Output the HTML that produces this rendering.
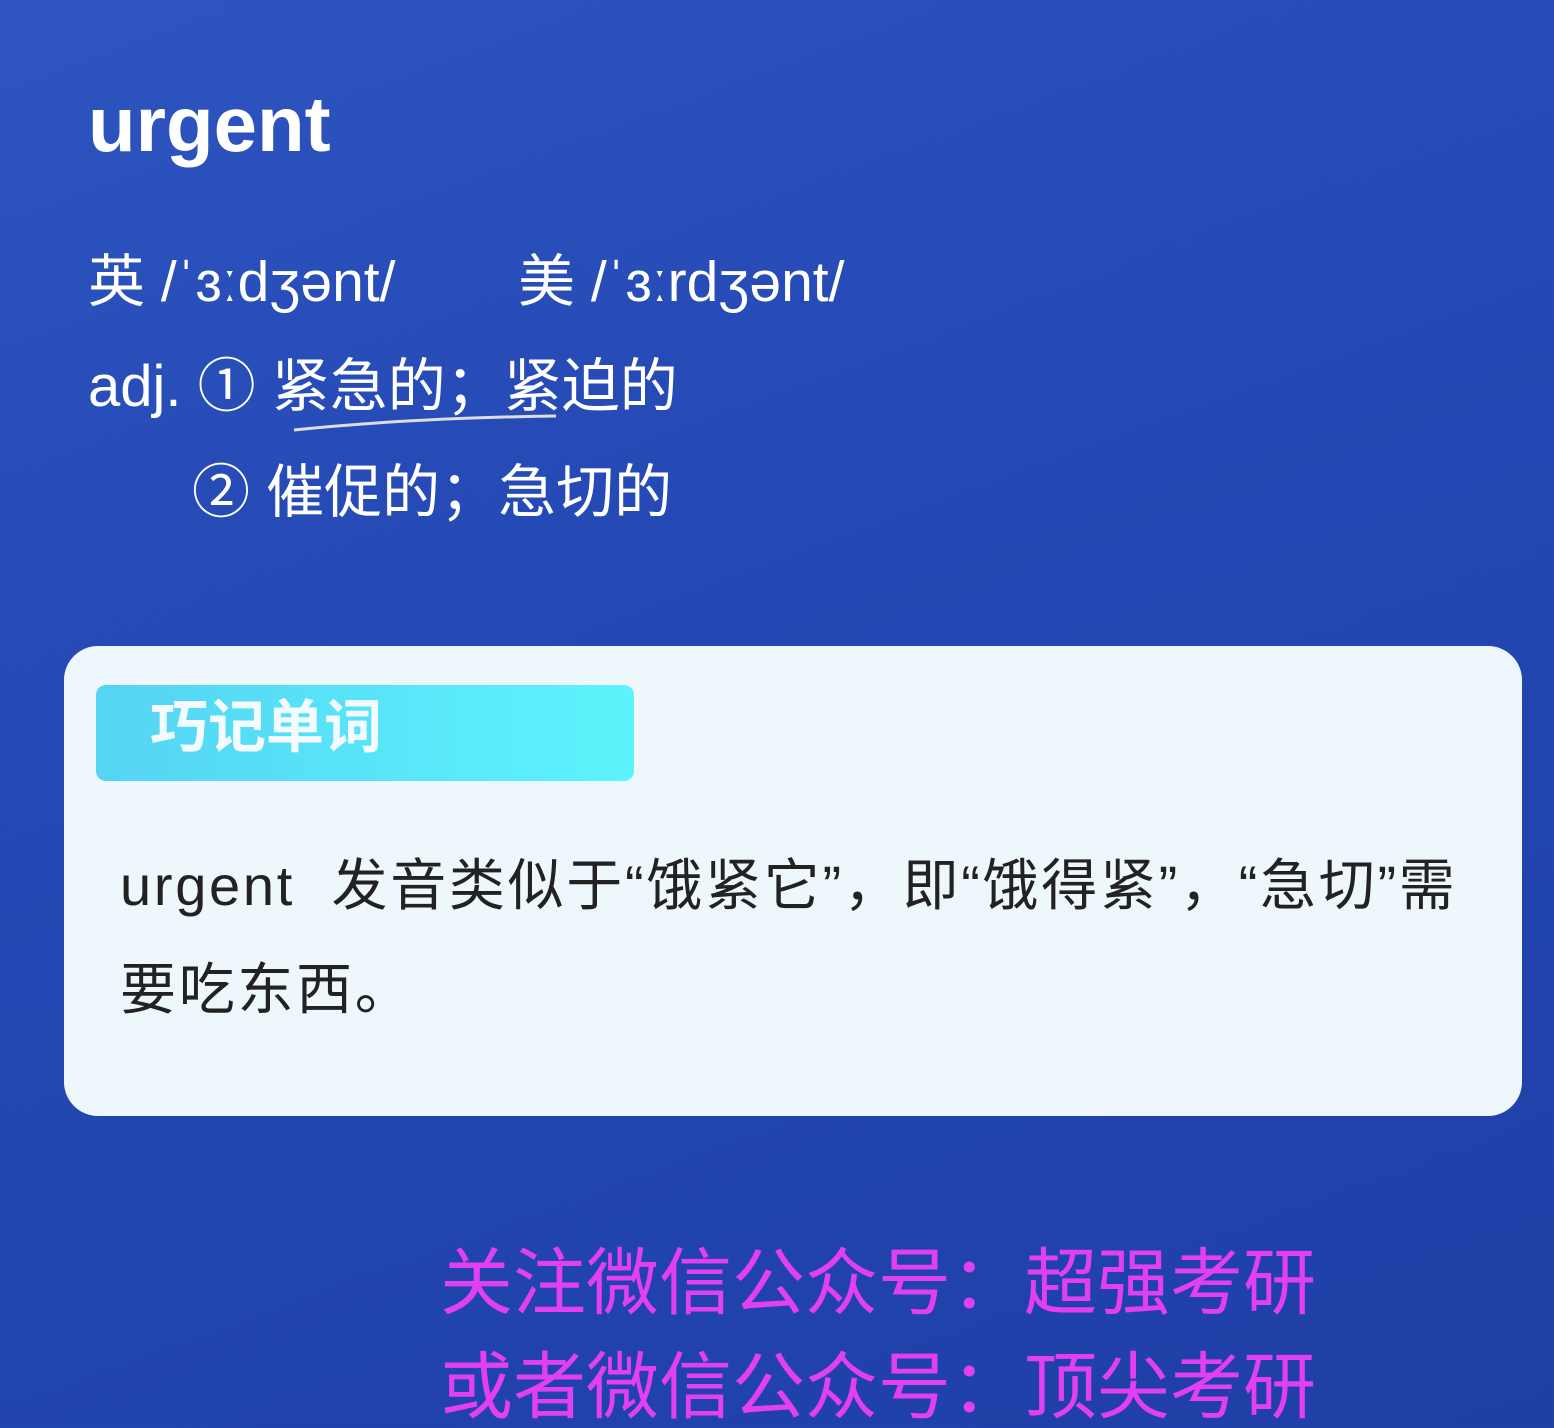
<!DOCTYPE html>
<html><head><meta charset="utf-8"><style>
html,body{margin:0;padding:0;overflow:hidden;width:1554px;height:1428px}
body{position:relative;
background:linear-gradient(160deg,#2e55c0 0%,#2448b4 40%,#1f3fa6 100%);
font-family:"Liberation Sans","Noto Sans CJK SC",sans-serif;color:#fff}
.a{position:absolute;white-space:nowrap;line-height:1.2}
.w{font-weight:bold;font-size:78px;left:88px;top:78px}
.p{font-size:57px;top:248px}
.d{font-size:58px;top:352px}
.card{position:absolute;left:64px;top:646px;width:1458px;height:470px;background:#eef7fc;border-radius:34px}
.tag{position:absolute;left:96px;top:685px;width:538px;height:96px;background:linear-gradient(90deg,#55d4f4,#5cf4fc);border-radius:10px}
.tag span{position:absolute;left:54px;top:8px;font-size:58px;font-weight:bold;color:#f4fbff;line-height:1.2}
.t{color:#222;font-size:56px;letter-spacing:2.7px}
.m{color:#e23ef2;font-size:73px;left:440px}
</style></head><body>
<div class="a w">urgent</div>
<div class="a p" style="left:88px">英 /ˈɜːdʒənt/</div>
<div class="a p" style="left:518px">美 /ˈɜːrdʒənt/</div>
<div class="a d" style="left:88px">adj. ① 紧急的；紧迫的</div>
<div class="a d" style="left:192px;top:458px">② 催促的；急切的</div>
<svg class="a" style="left:290px;top:408px" width="280" height="30"><path d="M4 22 Q120 10 266 8" stroke="#ddd" stroke-width="3" fill="none"/></svg>
<div class="card"></div>
<div class="tag"><span>巧记单词</span></div>
<div class="a t" style="left:120px;top:852px">urgent&nbsp; 发音类似于“饿紧它”，即“饿得紧”，“急切”需</div>
<div class="a t" style="left:120px;top:956px">要吃东西。</div>
<div class="a m" style="top:1240px">关注微信公众号：超强考研</div>
<div class="a m" style="top:1344px">或者微信公众号：顶尖考研</div>
</body></html>
